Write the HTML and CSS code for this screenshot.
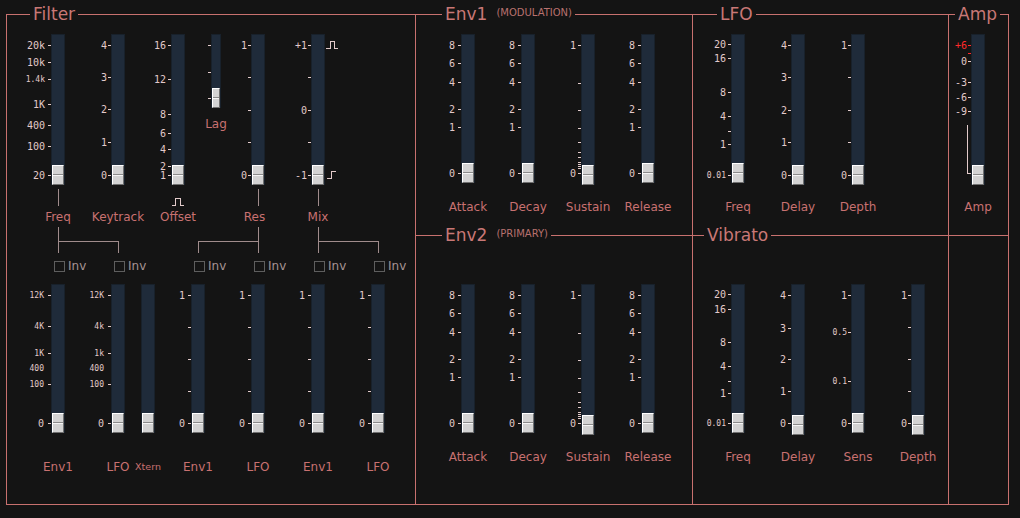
FILE: index.html
```html
<!DOCTYPE html>
<html>
<head>
<meta charset="utf-8">
<link rel="stylesheet" href="styles.css">
</head>
<body>
<div class="panel">

  <!-- FILTER -->
  <section class="cell filter">
    <div class="legend"><span class="t">Filter</span></div>
    <div class="row r1">
      <div class="fader">
        <div class="scale s44 g3">
          <i class="tk" style="top:11px">20k</i><i class="tk" style="top:28px">10k</i><i class="tk sm" style="top:45px">1.4k</i><i class="tk" style="top:70px">1K</i><i class="tk" style="top:91px">400</i><i class="tk" style="top:112px">100</i><i class="tk" style="top:141px">20</i>
        </div>
        <div class="col">
          <div class="track"><b class="thumb"></b></div>
          <div class="stem"></div>
          <div class="lbl">Freq</div>
          <div class="stem2"></div>
          <div class="brk"></div>
        </div>
      </div>
      <div class="fader">
        <div class="scale s46 g1">
          <i class="tk" style="top:11px">4</i><i class="tk" style="top:43px">3</i><i class="tk" style="top:75px">2</i><i class="tk" style="top:108px">1</i><i class="tk" style="top:141px">0</i>
        </div>
        <div class="col">
          <div class="track"><b class="thumb"></b></div>
          <div class="stem off"></div>
          <div class="lbl">Keytrack</div>
        </div>
      </div>
      <div class="fader">
        <div class="scale s46 g2">
          <i class="tk" style="top:11px">16</i><i class="tk" style="top:45px">12</i><i class="tk" style="top:80px">8</i><i class="tk" style="top:99px">6</i><i class="tk" style="top:115px">4</i><i class="tk" style="top:132px">2</i><i class="tk" style="top:141px">1</i>
        </div>
        <div class="col">
          <div class="track"><b class="thumb"></b></div>
          <div class="slot"><svg class="pulse" width="12" height="8" viewBox="0 0 12 8"><path d="M0 7.5H3.5V0.5H8.5V7.5H12"/></svg></div>
          <div class="lbl">Offset</div>
        </div>
      </div>
      <div class="fader">
        <div class="scale s26">
          <i class="tk" style="top:11px"></i><i class="tk" style="top:38px"></i><i class="tk" style="top:64px"></i>
        </div>
        <div class="col lag">
          <div class="track lagt"><b class="thumb"></b></div>
          <div class="lbl lagl">Lag</div>
        </div>
      </div>
      <div class="fader">
        <div class="scale s30 g1">
          <i class="tk" style="top:11px">1</i><i class="tk" style="top:43px"></i><i class="tk" style="top:76px"></i><i class="tk" style="top:108px"></i><i class="tk" style="top:141px">0</i>
        </div>
        <div class="col">
          <div class="track"><b class="thumb"></b></div>
          <div class="stem"></div>
          <div class="lbl sh">Res</div>
          <div class="stem2"></div>
          <div class="brk l"></div>
        </div>
      </div>
      <div class="fader">
        <div class="scale s46 g1">
          <i class="tk" style="top:11px">+1</i><i class="tk" style="top:43px"></i><i class="tk" style="top:76px">0</i><i class="tk" style="top:108px"></i><i class="tk" style="top:141px">-1</i>
        </div>
        <div class="col">
          <div class="track"><b class="thumb"></b></div>
          <div class="stem"></div>
          <div class="lbl">Mix</div>
          <div class="stem2"></div>
          <div class="brk"></div>
        </div>
        <div class="rs">
          <svg class="ic" style="top:11px" width="12" height="8" viewBox="0 0 12 8"><path d="M0 7.5H4.5V0.5H8.5V7.5H12"/></svg>
          <svg class="ic" style="top:141px" width="12" height="8" viewBox="0 0 12 8"><path d="M1 7.5H5.5V0.5H10"/></svg>
        </div>
      </div>
    </div>

    <div class="cbrow">
      <div class="cbi"><span class="cb"></span>Inv</div>
      <div class="cbi w80"><span class="cb"></span>Inv</div>
      <div class="cbi"><span class="cb"></span>Inv</div>
      <div class="cbi"><span class="cb"></span>Inv</div>
      <div class="cbi"><span class="cb"></span>Inv</div>
      <div class="cbi"><span class="cb"></span>Inv</div>
    </div>

    <div class="row r2">
      <div class="fader">
        <div class="scale s44 g4">
          <i class="tk sm" style="top:11px">12K</i><i class="tk sm" style="top:42px">4K</i><i class="tk sm" style="top:69px">1K</i><i class="tk sm nd" style="top:84px">400</i><i class="tk sm" style="top:100px">100</i><i class="tk" style="top:139px">0</i>
        </div>
        <div class="col">
          <div class="track short"><b class="thumb"></b></div>
          <div class="lbl">Env1</div>
        </div>
      </div>
      <div class="fader">
        <div class="scale s46 g4">
          <i class="tk sm" style="top:11px">12K</i><i class="tk sm" style="top:42px">4k</i><i class="tk sm" style="top:69px">1k</i><i class="tk sm nd" style="top:84px">400</i><i class="tk sm" style="top:100px">100</i><i class="tk" style="top:139px">0</i>
        </div>
        <div class="col">
          <div class="track short"><b class="thumb"></b></div>
          <div class="lbl">LFO</div>
        </div>
      </div>
      <div class="fader">
        <div class="scale s16"></div>
        <div class="col">
          <div class="track short"><b class="thumb"></b></div>
          <div class="lbl xt">Xtern</div>
        </div>
      </div>
      <div class="fader">
        <div class="scale s36">
          <i class="tk" style="top:11px">1</i><i class="tk" style="top:43px"></i><i class="tk" style="top:75px"></i><i class="tk" style="top:107px"></i><i class="tk" style="top:139px">0</i>
        </div>
        <div class="col">
          <div class="track short"><b class="thumb"></b></div>
          <div class="lbl">Env1</div>
        </div>
      </div>
      <div class="fader">
        <div class="scale s46">
          <i class="tk" style="top:11px">1</i><i class="tk" style="top:43px"></i><i class="tk" style="top:75px"></i><i class="tk" style="top:107px"></i><i class="tk" style="top:139px">0</i>
        </div>
        <div class="col">
          <div class="track short"><b class="thumb"></b></div>
          <div class="lbl">LFO</div>
        </div>
      </div>
      <div class="fader">
        <div class="scale s46">
          <i class="tk" style="top:11px">1</i><i class="tk" style="top:43px"></i><i class="tk" style="top:75px"></i><i class="tk" style="top:107px"></i><i class="tk" style="top:139px">0</i>
        </div>
        <div class="col">
          <div class="track short"><b class="thumb"></b></div>
          <div class="lbl">Env1</div>
        </div>
      </div>
      <div class="fader">
        <div class="scale s46">
          <i class="tk" style="top:11px">1</i><i class="tk" style="top:43px"></i><i class="tk" style="top:75px"></i><i class="tk" style="top:107px"></i><i class="tk" style="top:139px">0</i>
        </div>
        <div class="col">
          <div class="track short"><b class="thumb"></b></div>
          <div class="lbl">LFO</div>
        </div>
      </div>
    </div>
  </section>

  <!-- ENV1 -->
  <section class="cell env">
    <div class="legend"><span class="t">Env1<small>(MODULATION)</small></span></div>
    <div class="row re">
      <div class="fader">
        <div class="scale s45"><i class="tk" style="top:11px">8</i><i class="tk" style="top:29px">6</i><i class="tk" style="top:48px">4</i><i class="tk" style="top:75px">2</i><i class="tk" style="top:93px">1</i><i class="tk" style="top:139px">0</i></div>
        <div class="col"><div class="track short"><b class="thumb"></b></div><div class="lbl">Attack</div></div>
      </div>
      <div class="fader">
        <div class="scale s46"><i class="tk" style="top:11px">8</i><i class="tk" style="top:29px">6</i><i class="tk" style="top:48px">4</i><i class="tk" style="top:75px">2</i><i class="tk" style="top:93px">1</i><i class="tk" style="top:139px">0</i></div>
        <div class="col"><div class="track short"><b class="thumb"></b></div><div class="lbl">Decay</div></div>
      </div>
      <div class="fader">
        <div class="scale s46 g2"><i class="tk" style="top:11px">1</i><i class="tk" style="top:49px"></i><i class="tk" style="top:76px"></i><i class="tk" style="top:94px"></i><i class="tk" style="top:108px"></i><i class="tk" style="top:118px"></i><i class="tk" style="top:123px"></i><i class="tk" style="top:128px"></i><i class="tk" style="top:130px"></i><i class="tk" style="top:132px"></i><i class="tk" style="top:134px"></i><i class="tk" style="top:139px">0</i></div>
        <div class="col"><div class="track"><b class="thumb"></b></div><div class="lbl">Sustain</div></div>
      </div>
      <div class="fader">
        <div class="scale s46"><i class="tk" style="top:11px">8</i><i class="tk" style="top:29px">6</i><i class="tk" style="top:48px">4</i><i class="tk" style="top:75px">2</i><i class="tk" style="top:93px">1</i><i class="tk" style="top:139px">0</i></div>
        <div class="col"><div class="track short"><b class="thumb"></b></div><div class="lbl">Release</div></div>
      </div>
    </div>
  </section>

  <!-- LFO -->
  <section class="cell lfo">
    <div class="legend"><span class="t">LFO</span></div>
    <div class="row re">
      <div class="fader">
        <div class="scale s38 g2"><i class="tk" style="top:10px">20</i><i class="tk" style="top:24px">16</i><i class="tk" style="top:58px">8</i><i class="tk" style="top:82px">4</i><i class="tk" style="top:97px"></i><i class="tk" style="top:110px">1</i><i class="tk sm" style="top:141px">0.01</i></div>
        <div class="col"><div class="track short"><b class="thumb"></b></div><div class="lbl">Freq</div></div>
      </div>
      <div class="fader">
        <div class="scale s46 g1"><i class="tk" style="top:11px">4</i><i class="tk" style="top:43px">3</i><i class="tk" style="top:76px">2</i><i class="tk" style="top:108px">1</i><i class="tk" style="top:141px">0</i></div>
        <div class="col"><div class="track"><b class="thumb"></b></div><div class="lbl">Delay</div></div>
      </div>
      <div class="fader">
        <div class="scale s46 g1"><i class="tk" style="top:11px">1</i><i class="tk" style="top:43px"></i><i class="tk" style="top:76px"></i><i class="tk" style="top:108px"></i><i class="tk" style="top:141px">0</i></div>
        <div class="col"><div class="track"><b class="thumb"></b></div><div class="lbl">Depth</div></div>
      </div>
    </div>
  </section>

  <!-- AMP -->
  <section class="cell amp">
    <div class="legend"><span class="t">Amp</span></div>
    <div class="row re">
      <div class="fader">
        <div class="scale s22 g1"><i class="tk red" style="top:11px">+6</i><i class="tk red" style="top:19px"></i><i class="tk" style="top:27px">0</i><i class="tk" style="top:48px">-3</i><i class="tk" style="top:63px">-6</i><i class="tk" style="top:77px">-9</i><span class="ampl"></span></div>
        <div class="col"><div class="track"><b class="thumb"></b></div><div class="lbl">Amp</div></div>
      </div>
    </div>
  </section>

  <!-- ENV2 -->
  <section class="cell env bot">
    <div class="legend"><span class="t">Env2<small>(PRIMARY)</small></span></div>
    <div class="row re">
      <div class="fader">
        <div class="scale s45"><i class="tk" style="top:11px">8</i><i class="tk" style="top:29px">6</i><i class="tk" style="top:48px">4</i><i class="tk" style="top:75px">2</i><i class="tk" style="top:93px">1</i><i class="tk" style="top:139px">0</i></div>
        <div class="col"><div class="track short"><b class="thumb"></b></div><div class="lbl">Attack</div></div>
      </div>
      <div class="fader">
        <div class="scale s46"><i class="tk" style="top:11px">8</i><i class="tk" style="top:29px">6</i><i class="tk" style="top:48px">4</i><i class="tk" style="top:75px">2</i><i class="tk" style="top:93px">1</i><i class="tk" style="top:139px">0</i></div>
        <div class="col"><div class="track short"><b class="thumb"></b></div><div class="lbl">Decay</div></div>
      </div>
      <div class="fader">
        <div class="scale s46 g2"><i class="tk" style="top:11px">1</i><i class="tk" style="top:49px"></i><i class="tk" style="top:76px"></i><i class="tk" style="top:94px"></i><i class="tk" style="top:108px"></i><i class="tk" style="top:118px"></i><i class="tk" style="top:123px"></i><i class="tk" style="top:128px"></i><i class="tk" style="top:130px"></i><i class="tk" style="top:132px"></i><i class="tk" style="top:134px"></i><i class="tk" style="top:139px">0</i></div>
        <div class="col"><div class="track"><b class="thumb"></b></div><div class="lbl">Sustain</div></div>
      </div>
      <div class="fader">
        <div class="scale s46"><i class="tk" style="top:11px">8</i><i class="tk" style="top:29px">6</i><i class="tk" style="top:48px">4</i><i class="tk" style="top:75px">2</i><i class="tk" style="top:93px">1</i><i class="tk" style="top:139px">0</i></div>
        <div class="col"><div class="track short"><b class="thumb"></b></div><div class="lbl">Release</div></div>
      </div>
    </div>
  </section>

  <!-- VIBRATO -->
  <section class="cell vib bot">
    <div class="legend"><span class="t">Vibrato</span></div>
    <div class="row re">
      <div class="fader">
        <div class="scale s38 g2"><i class="tk" style="top:10px">20</i><i class="tk" style="top:25px">16</i><i class="tk" style="top:58px">8</i><i class="tk" style="top:82px">4</i><i class="tk" style="top:97px"></i><i class="tk" style="top:109px">1</i><i class="tk sm" style="top:139px">0.01</i></div>
        <div class="col"><div class="track short"><b class="thumb"></b></div><div class="lbl">Freq</div></div>
      </div>
      <div class="fader">
        <div class="scale s46 g2"><i class="tk" style="top:11px">4</i><i class="tk" style="top:44px">3</i><i class="tk" style="top:75px">2</i><i class="tk" style="top:107px">1</i><i class="tk" style="top:139px">0</i></div>
        <div class="col"><div class="track"><b class="thumb"></b></div><div class="lbl">Delay</div></div>
      </div>
      <div class="fader">
        <div class="scale s46 g1"><i class="tk" style="top:11px">1</i><i class="tk sm" style="top:48px">0.5</i><i class="tk sm" style="top:97px">0.1</i><i class="tk" style="top:139px">0</i></div>
        <div class="col"><div class="track short"><b class="thumb"></b></div><div class="lbl">Sens</div></div>
      </div>
      <div class="fader">
        <div class="scale s46 g1"><i class="tk" style="top:11px">1</i><i class="tk" style="top:43px"></i><i class="tk" style="top:75px"></i><i class="tk" style="top:107px"></i><i class="tk" style="top:139px">0</i></div>
        <div class="col"><div class="track"><b class="thumb"></b></div><div class="lbl">Depth</div></div>
      </div>
    </div>
  </section>

  <section class="cell amp bot"></section>
</div>
</body>
</html>
```

FILE: styles.css
```css
* { box-sizing: border-box; }
html, body { margin: 0; background: #141414; }
body {
  padding: 14px 0 0 6px;
  width: 1020px;
  height: 518px;
  overflow: hidden;
}

.panel {
  display: grid;
  grid-template-columns: 409px 277px 256px 60px;
  grid-template-rows: 221px 269px;
  width: 1003px;
  height: 491px;
  border-left: 1px solid #c8716f;
  border-bottom: 1px solid #c8716f;
}

.cell {
  border-top: 1px solid #c8716f;
  border-right: 1px solid #c8716f;
  min-width: 0;
}
.filter { grid-row: 1 / 3; }

/* section titles sitting on the frame line */
.legend {
  display: flex;
  align-items: flex-start;
  height: 19px;
  white-space: nowrap;
}
.bot .legend { height: 48px; }
.t {
  display: inline-flex;
  align-items: center;
  position: relative;
  top: -11px;
  background: #141414;
  padding: 0 3px;
  font: 17px/20px "DejaVu Sans", sans-serif;
  color: #c97876;
}
.t small {
  font-size: 10px;
  line-height: 12px;
  margin: 0 0 2px 9px;
  color: #b8716f;
}
.filter .t { margin-left: 23px; }
.env .t { margin-left: 26px; }
.lfo .t { margin-left: 24px; }
.vib .t { margin-left: 11px; }
.amp .t { margin-left: 6px; }

/* fader rows */
.row { display: flex; align-items: flex-start; }
.r2 { margin-top: 12px; }
.fader { display: flex; align-items: flex-start; flex: none; }

.scale { position: relative; height: 151px; flex: none; --g: 3px; }
.s16 { width: 16px; } .s22 { width: 22px; } .s26 { width: 26px; }
.s30 { width: 30px; } .s36 { width: 36px; } .s38 { width: 38px; }
.s44 { width: 44px; } .s45 { width: 45px; } .s46 { width: 46px; }
.g1 { --g: 1px; } .g2 { --g: 2px; } .g3 { --g: 3px; } .g4 { --g: 4px; }

.tk {
  position: absolute;
  right: 0;
  height: 11px;
  margin-top: -5px;
  display: flex;
  align-items: center;
  font: normal 10px/11px "DejaVu Sans Mono", monospace;
  color: #e2caca;
  white-space: nowrap;
}
.tk::after {
  content: "";
  width: 3px;
  height: 1px;
  background: currentColor;
  margin-left: var(--g);
}
.tk.sm { font-size: 8px; }
.tk.nd::after { background: transparent; }
.tk.red { color: #ff2a2a; }

.col {
  display: flex;
  flex-direction: column;
  align-items: center;
  width: 14px;
  flex: none;
}
.col.lag { width: 10px; }

.track {
  position: relative;
  width: 14px;
  height: 151px;
  flex: none;
  background: #1f2b3a;
  border: 1px solid #18212b;
}
.track.short { height: 149px; margin-bottom: 2px; }
.track.lagt { width: 10px; height: 74px; }

.thumb {
  position: absolute;
  left: 0;
  bottom: -1px;
  width: 12px;
  height: 20px;
  background: #d3d3d3;
  border: 1px solid;
  border-color: #ffffff #6f6f6f #6f6f6f #ffffff;
}
.lagt .thumb { width: 8px; }
.thumb::before {
  content: "";
  position: absolute;
  left: 0; right: 0; top: 8px;
  height: 1px;
  background: #8a8a8a;
}
.thumb::after {
  content: "";
  position: absolute;
  left: 0; right: 0; top: 9px;
  height: 1px;
  background: #f6f6f6;
}

/* connector lines */
.stem {
  align-self: flex-start;
  margin: 4px 0 0 7px;
  width: 1px;
  height: 17px;
  background: #a08c8c;
}
.stem.off { visibility: hidden; }
.slot {
  margin-top: 4px;
  height: 17px;
  display: flex;
  align-items: flex-end;
}
.pulse { display: block; fill: none; stroke: #e2caca; stroke-width: 1; shape-rendering: crispEdges; }
.stem2 {
  align-self: flex-start;
  margin: 3px 0 0 7px;
  width: 1px;
  height: 14px;
  background: #a08c8c;
}
.brk {
  align-self: flex-start;
  margin-left: 7px;
  width: 61px;
  height: 12px;
  border: 1px solid #a08c8c;
  border-bottom: 0;
}
.brk.l { margin-left: -53px; }

.rs { position: relative; width: 14px; height: 151px; flex: none; }
.ic {
  position: absolute;
  left: 1px;
  margin-top: -4px;
  fill: none;
  stroke: #e2caca;
  stroke-width: 1;
  shape-rendering: crispEdges;
}

.ampl {
  position: absolute;
  right: 0;
  top: 91px;
  width: 4px;
  height: 49px;
  border-left: 1px solid #e2caca;
  border-bottom: 1px solid #e2caca;
}

/* labels */
.lbl {
  font: 12px/14px "DejaVu Sans", sans-serif;
  color: #c87171;
  white-space: nowrap;
}
.r1 .lbl { margin-top: 4px; }
.r1 .lbl.lagl { margin-top: 9px; }
.re .lbl { margin-top: 15px; }
.r2 .lbl { margin-top: 25px; }
.lbl.xt { font-size: 9.5px; }
.lbl.sh { margin-right: 7px; }

/* checkboxes */
.cbrow {
  display: flex;
  margin-top: 8px;
  padding-left: 47px;
  height: 11px;
}
.cbi {
  display: flex;
  align-items: center;
  width: 60px;
  height: 11px;
  flex: none;
  font: 12px/11px "DejaVu Sans", sans-serif;
  color: #a69595;
}
.cbi.w80 { width: 80px; }
.cb {
  width: 11px;
  height: 11px;
  flex: none;
  border: 1px solid #5e5e5e;
  margin-right: 3px;
}
```
